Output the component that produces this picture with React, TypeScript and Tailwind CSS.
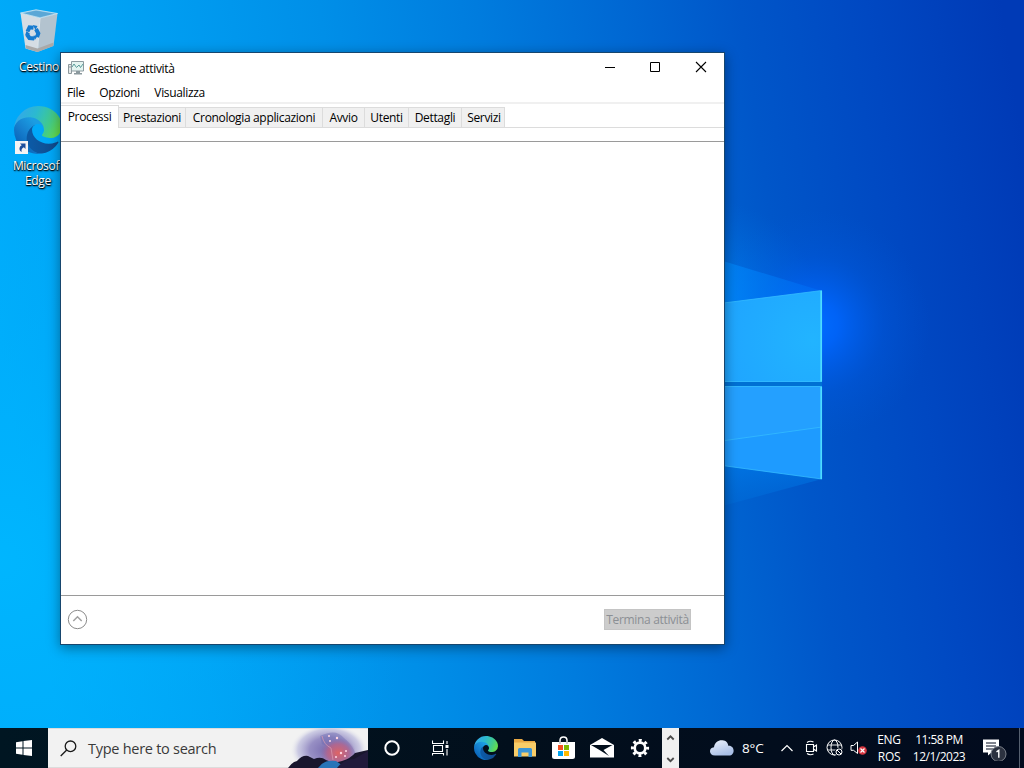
import type { ReactNode } from 'react'

const tabs = [
  { label: 'Prestazioni', className: 'w-[67px]' },
  { label: 'Cronologia applicazioni', className: 'w-[137px]' },
  { label: 'Avvio', className: 'w-[42px]' },
  { label: 'Utenti', className: 'w-[44px]' },
  { label: 'Dettagli', className: 'w-[53px]' },
  { label: 'Servizi', className: 'w-[43px] pl-[2px]' },
]

function Wallpaper() {
  return (
    <svg className="absolute inset-0" width="1024" height="768" viewBox="0 0 1024 768">
      <defs>
        <linearGradient id="sky" gradientUnits="userSpaceOnUse" x1="20" y1="480" x2="1050" y2="330">
          <stop offset="0" stopColor="#00adfb" />
          <stop offset="0.15" stopColor="#00a2f4" />
          <stop offset="0.35" stopColor="#008fe8" />
          <stop offset="0.5" stopColor="#007cde" />
          <stop offset="0.65" stopColor="#0066d2" />
          <stop offset="0.75" stopColor="#0056c9" />
          <stop offset="0.87" stopColor="#0048c2" />
          <stop offset="1" stopColor="#003ab6" />
        </linearGradient>
        <radialGradient id="glow" gradientUnits="userSpaceOnUse" cx="815" cy="325" r="115">
          <stop offset="0" stopColor="#006cff" />
          <stop offset="0.2" stopColor="#0066ff" stopOpacity="0.85" />
          <stop offset="0.6" stopColor="#005ce8" stopOpacity="0.3" />
          <stop offset="1" stopColor="#0058d8" stopOpacity="0" />
        </radialGradient>
        <radialGradient id="sideGlow" gradientUnits="userSpaceOnUse" cx="710" cy="310" r="110">
          <stop offset="0" stopColor="#0090ff" stopOpacity="0.8" />
          <stop offset="1" stopColor="#0070e0" stopOpacity="0" />
        </radialGradient>
        <radialGradient id="lowGlow" gradientUnits="userSpaceOnUse" cx="0" cy="560" r="420">
          <stop offset="0" stopColor="#00b8ff" stopOpacity="0.8" />
          <stop offset="1" stopColor="#00a8f8" stopOpacity="0" />
        </radialGradient>
        <radialGradient id="pane" gradientUnits="userSpaceOnUse" cx="812" cy="340" r="130">
          <stop offset="0" stopColor="#22b4ff" />
          <stop offset="1" stopColor="#1e9fff" />
        </radialGradient>
        <linearGradient id="rayTop" x1="0" y1="0" x2="1" y2="0">
          <stop offset="0" stopColor="#0092ff" stopOpacity="0.65" />
          <stop offset="1" stopColor="#0078ff" stopOpacity="0.3" />
        </linearGradient>
        <linearGradient id="rayBottom" x1="0" y1="0" x2="0" y2="1">
          <stop offset="0" stopColor="#0080f0" stopOpacity="0.6" />
          <stop offset="1" stopColor="#0078e0" stopOpacity="0.15" />
        </linearGradient>
      </defs>
      <rect width="1024" height="768" fill="url(#sky)" />
      <rect width="1024" height="768" fill="url(#lowGlow)" />
      <rect width="1024" height="768" fill="url(#sideGlow)" />
      <rect width="1024" height="768" fill="url(#glow)" />
      <path d="M700 254 822 291 700 306Z" fill="url(#rayTop)" />
      <path d="M700 462 822 479 700 512Z" fill="url(#rayBottom)" />
      <path d="M700 306 822 290.500V382H700Z" fill="url(#pane)" />
      <path d="M700 386H822V479L700 462.500Z" fill="#1e9bff" />
      <path d="M700 386H822V427L700 444Z" fill="#2aa5ff" opacity="0.5" />
      <path d="M700 382H822V386H700Z" fill="#0070d4" />
      <path d="M700 444 822 427M700 306 822 290.500M700 462.500 822 479M700 386.500H822M700 381.500H822" fill="none" stroke="#35bcff" strokeOpacity="0.8" />
      <path d="M821.200 291V381.500M821.200 387V479" stroke="#4ddcff" strokeWidth="1.700" />
    </svg>
  )
}

function EdgeIcon({ size }: { size: number }) {
  return (
    <svg width={size} height={size} viewBox="0 0 256 256" className="shrink-0">
      <defs>
        <linearGradient id="edgeDark" x1="0.2" y1="0.5" x2="1" y2="0.5">
          <stop offset="0" stopColor="#0c59a4" />
          <stop offset="1" stopColor="#114a8b" />
        </linearGradient>
        <linearGradient id="edgeBlue" x1="0.8" y1="0.3" x2="0.3" y2="0.9">
          <stop offset="0" stopColor="#1b9de2" />
          <stop offset="0.5" stopColor="#1680cf" />
          <stop offset="1" stopColor="#0a64b8" />
        </linearGradient>
        <linearGradient id="edgeGreen" x1="0" y1="0.3" x2="1" y2="0.6">
          <stop offset="0" stopColor="#35a6ec" />
          <stop offset="0.4" stopColor="#2bb9d0" />
          <stop offset="0.75" stopColor="#43cc8a" />
          <stop offset="1" stopColor="#66e04a" />
        </linearGradient>
      </defs>
      <path fill="url(#edgeDark)" d="M231 190.500c-3.400 1.800-6.900 3.400-10.500 4.700a101.500 101.500 0 0 1-35.900 6.400c-47.300 0-88.500-32.500-88.500-74.300a31.500 31.500 0 0 1 16.400-27.300c-42.800 1.800-53.800 46.400-53.800 72.500 0 74 68.100 81.400 82.800 81.400 7.900 0 19.800-2.300 27-4.600l1.300-.4a128.300 128.300 0 0 0 66.600-52.800 4 4 0 0 0-5.400-5.600Z" />
      <path fill="url(#edgeBlue)" d="M105.700 241.400a79.200 79.200 0 0 1-22.700-21.300 80.700 80.700 0 0 1 29.500-120c3.200-1.500 8.500-4.100 15.600-4a32.400 32.400 0 0 1 25.700 13 31.900 31.900 0 0 1 6.300 18.700c0-.2 24.500-79.600-80-79.600-43.900 0-80 41.700-80 78.200a130.200 130.200 0 0 0 12.100 56 128 128 0 0 0 156.400 67 75.500 75.500 0 0 1-62.800-8Z" />
      <path fill="url(#edgeGreen)" d="M152.300 148.900c-.9 1-3.400 2.500-3.400 5.600 0 2.600 1.700 5.200 4.800 7.300 14.300 10 41.400 8.600 41.500 8.600a59.600 59.600 0 0 0 30.300-8.300 61.400 61.400 0 0 0 30.400-52.900c.3-22.400-8-37.300-11.300-43.900C223.500 23.900 177.700 0 128 0A128 128 0 0 0 0 126.200c.5-36.500 36.800-66 80-66 3.500 0 23.500.3 42 10 16.300 8.600 24.900 19 30.800 29.200 6.200 10.700 7.300 24.100 7.300 29.500 0 5.300-2.700 13.300-7.800 20Z" />
    </svg>
  )
}

function RecycleBin() {
  return (
    <svg width="40" height="44" viewBox="0 0 40 44">
      <path d="M1.500 4 21 9 18.500 43 6.500 39.500Z" fill="#d5dde4" />
      <path d="M21 9 38.500 4.500 34.500 37 18.500 43Z" fill="#b3c3cf" />
      <path d="M1.500 4 17 .8 38.500 4.500 21 9Z" fill="#78b9e0" />
      <path d="M4 4.200 17 1.800 35.500 4.700 21 8Z" fill="#5ba7d6" />
      <path d="M1.500 4 17 .8 38.500 4.500 21 9Z" fill="none" stroke="#d4e8f3" strokeWidth="0.800" />
      <path d="M21 9 18.500 43" stroke="#dfe6eb" />
      <path d="m6.500 36 12 3.500 16-6-.5 3.500-15.500 6-11.500-3.500Z" fill="#aaa9a8" />
      <g fill="none" stroke="#167bd0" strokeWidth="4">
        <path d="M8.500 22.500 10.500 18.300 14.500 18.800" />
        <path d="M17 20 19.300 24.500 18 28" />
        <path d="M15.300 29.500 10.500 29 8 25.500" />
      </g>
      <path d="m13.800 16 4.700 1-2 4ZM19 26.500l-3.200 4.500-1.500-4.200ZM6 26.500l1.500-4.500 3.700 3Z" fill="#167bd0" />
    </svg>
  )
}

function DesktopLabel({ children }: { children: ReactNode }) {
  return (
    <span className="text-center text-[12px] leading-[15px] tracking-[-0.3px] text-white [text-shadow:1px_1px_2px_#000,0_1px_1px_#000]">
      {children}
    </span>
  )
}

function DesktopIcons() {
  return (
    <div className="relative flex w-[76px] flex-col items-center pt-[9px]">
      <div className="flex flex-col items-center gap-[6px] pl-[2px]">
        <RecycleBin />
        <DesktopLabel>Cestino</DesktopLabel>
      </div>
      <div className="mt-[32px] flex flex-col items-center gap-[4px]">
        <div className="relative">
          <EdgeIcon size={48} />
          <svg className="absolute bottom-0 left-[1px]" width="13" height="13" viewBox="0 0 13 13">
            <path d="M0 0H13V13H0Z" fill="#f4f4f4" />
            <path d="M5 2.500H10.500V8L8.800 6.300C6.500 7.300 6.300 9 6.700 11 3.500 9.500 4 5.500 6.800 4.300Z" fill="#1c4f9c" />
          </svg>
        </div>
        <DesktopLabel>
          Microsoft
          <br />
          Edge
        </DesktopLabel>
      </div>
    </div>
  )
}

function TaskManager() {
  return (
    <div className="absolute left-[60px] top-[52px] flex h-[593px] w-[665px] flex-col border border-[#17466e] bg-white text-[12px] tracking-[-0.33px] text-black shadow-[0_3px_12px_rgba(0,0,0,0.4)]">
      <div className="flex h-[30px] items-center pl-[7px]">
        <svg width="16" height="16" viewBox="0 0 16 16">
          <path d="M.5 4.500h3v9h-3ZM1 7h2" fill="#e4e8e9" stroke="#8d989c" />
          <path d="M3.500 1.500h12v9.500h-12Z" fill="#e4f4f1" stroke="#8d9ba0" />
          <path d="m4 7 2-3 2.500 3.500L11 5l1.500 2.500L15 4" fill="none" stroke="#5a9c9b" />
          <path d="M8 11h4v2H8ZM6 13h8v1.500H6Z" fill="#8b999e" />
        </svg>
        <span className="ml-[5px] pt-px">Gestione attività</span>
        <div className="ml-auto flex">
          <svg width="136" height="30" viewBox="0 0 136 30" fill="none" stroke="#000">
            <path d="M17 14.500H27" />
            <path d="M62.500 9.500h9v9h-9Z" />
            <path d="m108 9 10 10m0-10-10 10" strokeWidth="1.100" />
          </svg>
        </div>
      </div>
      <div className="flex h-[19px] items-center gap-[14.5px] pl-[6px] pt-px">
        <span>File</span>
        <span>Opzioni</span>
        <span>Visualizza</span>
      </div>
      <div className="h-[2px] bg-[#f0f0f0]" />
      <div className="flex h-[24px] items-end border-b border-[#dcdcdc]">
        <div className="-mb-px flex h-[23px] w-[58px] items-center justify-center border-r border-t border-[#dcdcdc] bg-white pb-px">
          Processi
        </div>
        {tabs.map((tab) => (
          <div
            key={tab.label}
            className={`flex h-[20px] items-center justify-center whitespace-nowrap border-r border-t border-[#dcdcdc] bg-[#f0f0f0] pt-px ${tab.className}`}
          >
            {tab.label}
          </div>
        ))}
      </div>
      <div className="h-[14px] border-b border-[#9a9a9a]" />
      <div className="flex-1" />
      <div className="flex h-[49px] items-center justify-between border-t border-[#9a9a9a] pb-[2px] pl-[6px] pr-[33px]">
        <svg width="21" height="21" viewBox="0 0 21 21" fill="none" stroke="#8c8c8c">
          <circle cx="10.500" cy="10.500" r="9.200" />
          <path d="m6.300 12 4.200-4.200 4.200 4.200" strokeWidth="1.500" stroke="#a0a0a0" />
        </svg>
        <div className="flex h-[21px] w-[87px] items-center justify-center whitespace-nowrap border border-[#c4c4c4] bg-[#cccccc] pt-[2px] text-[#8b8f94]">
          Termina attività
        </div>
      </div>
    </div>
  )
}

function SearchArt() {
  return (
    <svg width="80" height="40" viewBox="0 0 80 40">
      <defs>
        <radialGradient id="cloud" cx="0.5" cy="0.5" r="0.5">
          <stop offset="0" stopColor="#7569ad" />
          <stop offset="0.5" stopColor="#978fc4" />
          <stop offset="0.8" stopColor="#c2c1df" stopOpacity="0.8" />
          <stop offset="1" stopColor="#f2f2f2" stopOpacity="0" />
        </radialGradient>
        <radialGradient id="ember" cx="0.5" cy="0.5" r="0.5">
          <stop offset="0" stopColor="#e06464" />
          <stop offset="0.6" stopColor="#b8648a" stopOpacity="0.8" />
          <stop offset="1" stopColor="#8d70b0" stopOpacity="0" />
        </radialGradient>
      </defs>
      <ellipse cx="41" cy="22" rx="39" ry="26" fill="url(#cloud)" />
      <path d="M32 8Q48 0 56 10Q70 22 68 34H44Q47 20 34 16Z" fill="#6a66ae" opacity="0.4" />
      <ellipse cx="50" cy="25" rx="18" ry="15" fill="url(#ember)" />
      <path d="M34 8Q36 17 43 20L45 32" fill="none" stroke="#db9bb0" opacity="0.7" />
      <path d="M0 40Q4 34 9 33 14 27 20 28L26 31Q33 28 38 32L46 35 54 33Q63 30 67 25L80 22V40Z" fill="#19162d" />
      <path d="M30 40Q36 31 48 33L58 40Z" fill="#2874b8" />
      <path d="M49 40Q56 31 66 31L80 23V40Z" fill="#211a3b" />
      <g fill="#ffd6e2">
        <circle cx="41" cy="8" r="1" />
        <circle cx="49" cy="10" r="1.200" />
        <circle cx="42" cy="13" r="1" />
        <circle cx="53" cy="25" r="1.200" />
        <circle cx="58" cy="23" r="1" />
        <circle cx="48" cy="29" r="1" />
        <circle cx="57" cy="28" r="1" />
      </g>
    </svg>
  )
}

function AppSlot({ children }: { children: ReactNode }) {
  return <div className="flex h-10 w-[38.5px] items-center justify-center">{children}</div>
}

function Taskbar() {
  return (
    <div className="relative flex h-10 items-center bg-[linear-gradient(90deg,#001622,#020f1c_50%,#020b1e)] text-white">
      <div className="flex w-12 justify-center">
        <svg width="16" height="16" viewBox="0 0 16 16" fill="#fff">
          <path d="M0 2.300 6.500 1.300V7.500H0ZM7.500 1.100 16 0V7.500H7.500ZM0 8.500H6.500V14.800L0 13.800ZM7.500 8.500H16V16L7.500 14.900Z" />
        </svg>
      </div>
      <div className="flex h-10 w-80 items-center border-y border-[#dcdcdc] bg-[#f2f2f2] pl-[12px]">
        <svg width="17" height="17" viewBox="0 0 17 17" fill="none" stroke="#1a1a1a" strokeWidth="1.300">
          <circle cx="10.500" cy="6.300" r="5.300" />
          <path d="M6.700 10 .7 16" />
        </svg>
        <span className="ml-[11px] pt-px text-[14.5px] tracking-[-0.27px] text-[#3a3a3a]">Type here to search</span>
        <div className="-my-px ml-auto">
          <SearchArt />
        </div>
      </div>
      <div className="flex w-12 justify-center">
        <svg width="16" height="16" viewBox="0 0 16 16">
          <circle cx="8" cy="8" r="6.700" fill="none" stroke="#fff" strokeWidth="2" />
        </svg>
      </div>
      <div className="flex w-12 justify-center">
        <svg width="17" height="16" viewBox="0 0 17 16" fill="none" stroke="#fff">
          <path d="M.5 .5V3.500H11.500V.5M1.500 5.500H10.500V11.500H1.500ZM.5 15.500V13.500H11.500V15.500M15 1V4M15 9V15.500" strokeWidth="1.100" />
          <path d="M13.500 5H16.500V8H13.500Z" fill="#fff" stroke="none" />
        </svg>
      </div>
      <div className="ml-[3px] flex w-[195px]">
        <AppSlot>
          <EdgeIcon size={24} />
        </AppSlot>
        <AppSlot>
          <svg width="22" height="20" viewBox="0 0 22 20">
            <path d="M0 1H8L10 3H21V18H0Z" fill="#e9a944" />
            <path d="M0 4.500H22V18.500H0Z" fill="#f9cd68" />
            <path d="M4 19V11.500Q4 10 5.500 10H16.500Q18 10 18 11.500V19H14.500V14.500H7.500V19Z" fill="#3b95d6" />
          </svg>
        </AppSlot>
        <AppSlot>
          <svg width="23" height="24" viewBox="0 0 23 24" className="-mt-[3px]">
            <path d="M8 9V5.500Q8 2 11.500 2T15 5.500V9" fill="none" stroke="#fff" strokeWidth="1.500" />
            <path d="M0 7H23V21.500Q23 24 20.500 24H2.500Q0 24 0 21.500Z" fill="#fff" />
            <path d="M8 9V6M15 9V6" stroke="#9aa0a4" />
            <path d="M6 10H11V15H6Z" fill="#f25022" />
            <path d="M12 10H17V15H12Z" fill="#7fba00" />
            <path d="M6 16H11V21H6Z" fill="#00a4ef" />
            <path d="M12 16H17V21H12Z" fill="#ffb900" />
          </svg>
        </AppSlot>
        <AppSlot>
          <svg width="24" height="20" viewBox="0 0 24 20">
            <path d="M0 7 12 0 24 7V19.500H0Z" fill="#fff" />
            <path d="M1 7H22.500L13.500 12 19 18 9.500 12Z" fill="#020f1c" />
          </svg>
        </AppSlot>
        <AppSlot>
          <svg width="20" height="20" viewBox="0 0 20 20" fill="none" stroke="#fff">
            <circle cx="10" cy="10" r="5.300" strokeWidth="2.700" />
            <circle cx="10" cy="10" r="7.600" strokeWidth="3" strokeDasharray="2.900 3.070" strokeDashoffset="1.450" />
          </svg>
        </AppSlot>
      </div>
      <svg width="17" height="40" viewBox="0 0 17 40">
        <path d="M0 0H17V40H0Z" fill="#f0f0f0" />
        <path d="M5.300 11.500 8.500 8.300 11.700 11.500M5.300 30 8.500 33.200 11.700 30" fill="none" stroke="#4a4a4a" strokeWidth="1.800" />
      </svg>
      <svg className="ml-[30px]" width="26" height="18" viewBox="0 0 26 18">
        <defs>
          <linearGradient id="weather" x1="0" y1="0" x2="0.500" y2="1">
            <stop offset="0" stopColor="#eef3fc" />
            <stop offset="1" stopColor="#a9bfe6" />
          </linearGradient>
        </defs>
        <path d="M6 16.500C-.5 16.500-.5 8.500 5 8.300 5.500 3 10 .8 13.500 1.300 17 1.500 19 4 19.300 6.700 26 6 26.500 16.500 20 16.500Z" fill="url(#weather)" />
      </svg>
      <span className="ml-[7px] w-[39px] pt-px text-[13.5px] tracking-[-0.1px]">8°C</span>
      <svg width="12" height="8" viewBox="0 0 12 8" fill="none" stroke="#fff" strokeWidth="1.200">
        <path d="m.5 7 5.500-5.500L11.500 7" />
      </svg>
      <svg className="ml-[12px]" width="13" height="16" viewBox="0 0 13 16" fill="none" stroke="#fff" strokeWidth="1.100">
        <path d="M1.500 4.500H8.500V11.500H1.500ZM8.500 7 11.500 5V11L8.500 9M2 2.500Q5 .3 8.500 2M2 13.500Q5 15.700 8.500 14" />
      </svg>
      <svg className="ml-[8px]" width="18" height="18" viewBox="0 0 18 18" fill="none" stroke="#fff">
        <circle cx="8.500" cy="8.500" r="7.500" />
        <ellipse cx="8.500" cy="8.500" rx="3.500" ry="7.500" />
        <path d="M1.500 6H15.500M1.500 11H15.500" strokeWidth="0.900" />
        <circle cx="13" cy="13" r="4.300" fill="#020c1e" stroke="none" />
        <circle cx="13" cy="13" r="3" />
        <path d="m11 11 4 4" />
      </svg>
      <svg className="ml-[6px]" width="18" height="18" viewBox="0 0 18 18">
        <path d="M1 6.500H3.500L7.500 3V14.500L3.500 11.300H1Z" fill="none" stroke="#fff" />
        <circle cx="12.500" cy="11.500" r="4.300" fill="#d73640" />
        <path d="m10.500 9.500 4 4m0-4-4 4" stroke="#fff" strokeWidth="1.200" />
      </svg>
      <div className="ml-[8px] flex w-[26px] flex-col items-center text-[12px] leading-[17px] tracking-[-0.3px]">
        <span>ENG</span>
        <span>ROS</span>
      </div>
      <div className="ml-[9px] flex w-[56px] flex-col items-center whitespace-nowrap text-[12px] leading-[17px] tracking-[-0.5px]">
        <span>11:58 PM</span>
        <span>12/1/2023</span>
      </div>
      <svg className="ml-[15px]" width="26" height="26" viewBox="0 0 26 26">
        <path d="M1 4.500H17V17.500H9.500L6 20.500V17.500H1Z" fill="#fff" />
        <path d="M4 8H14M4 11H14M4 14H11" stroke="#020b1e" />
        <circle cx="16.500" cy="19" r="7.500" fill="#2c3240" stroke="#7b808a" />
        <path d="m14.500 16.800 2.300-1.500V22.800" fill="none" stroke="#fff" strokeWidth="1.400" />
      </svg>
      <div className="ml-auto mr-1 h-10 w-px bg-[#56606f]" />
    </div>
  )
}

export default function App() {
  return (
    <div className="relative flex h-[768px] w-[1024px] flex-col justify-between overflow-hidden bg-[#0078d7] font-['Open_Sans','Noto_Sans',sans-serif]">
      <Wallpaper />
      <DesktopIcons />
      <TaskManager />
      <Taskbar />
    </div>
  )
}
